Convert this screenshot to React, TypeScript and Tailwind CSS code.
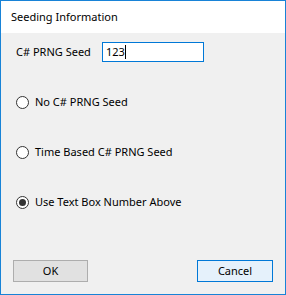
import React from 'react';

const font = { fontFamily: '"Segoe UI", "Noto Sans", "Liberation Sans", sans-serif' };

const Radio: React.FC<{ label: string; checked?: boolean }> = ({ label, checked }) => (
  <label className="flex items-center h-[17px] gap-[6px] text-[11px] text-black">
    <span className="w-[13px] h-[13px] rounded-full border border-[#333333] bg-white flex items-center justify-center">
      {checked && <span className="w-[7px] h-[7px] rounded-full bg-[#333333]" />}
    </span>
    <span>{label}</span>
  </label>
);

export default function App() {
  return (
    <div className="w-[286px] h-[295px] border border-[#1883d7] flex flex-col bg-[#f0f0f0]" style={font}>
      {/* Title bar */}
      <div className="h-[32px] bg-white flex items-center pl-[10px] text-[11px] text-black">
        Seeding Information
      </div>

      <div className="flex-1 flex flex-col px-[15px]">
        <div className="flex items-center mt-[9px] h-[20px] text-[11px] text-black">
          <span className="w-[86px] whitespace-nowrap">C# PRNG Seed</span>
          <div className="w-[102px] h-[20px] border border-[#0078d7] bg-white flex items-center pl-[3px]">
            <span>123</span>
            <span className="w-px h-[14px] bg-black" />
          </div>
        </div>

        <div className="flex flex-col gap-[33px] mt-[32px]">
          <Radio label="No C# PRNG Seed" />
          <Radio label="Time Based C# PRNG Seed" />
          <Radio label="Use Text Box Number Above" checked />
        </div>

        <div className="flex justify-between mt-[49px] -ml-[3px] -mr-[3px]">
          <button className="w-[75px] h-[22px] border border-[#adadad] bg-[#e1e1e1] text-[11px] text-black">OK</button>
          <button className="w-[76px] h-[22px] border border-[#0078d7] bg-[#e5f1fb] text-[11px] text-black">Cancel</button>
        </div>
      </div>
    </div>
  );
}
